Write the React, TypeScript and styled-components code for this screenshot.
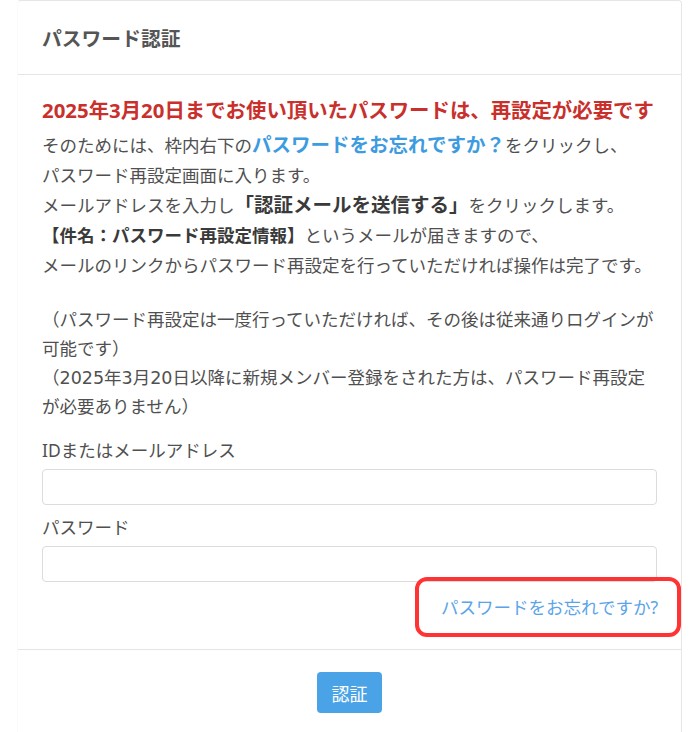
import styled, { createGlobalStyle } from "styled-components";

const GlobalStyle = createGlobalStyle`
  body {
    margin: 0;
    background: #ffffff;
    font-family: "Noto Sans", "Noto Sans CJK JP", sans-serif;
    color: #505050;
  }
`;

const Page = styled.div`
  padding-left: 17px;
  width: 665px;
  height: 732px;
  overflow: hidden;
`;

const Card = styled.div`
  background: #fff;
  border: 1px solid #e6e6e6;
  border-left-color: #fafafa;
  border-radius: 4px;
`;

const CardHeader = styled.div`
  height: 73px;
  display: flex;
  align-items: center;
  padding: 0 24px;
  border-bottom: 1px solid #e5e5e5;
`;

const HeaderTitle = styled.h3`
  margin: 0;
  font-size: 19.8px;
  font-weight: 700;
  color: #555;
`;

const CardBody = styled.div`
  padding: 20px 24px 30px;
  border-bottom: 1px solid #e5e5e5;
`;

const Warning = styled.div`
  font-size: 20.4px;
  line-height: 30px;
  font-weight: 700;
  color: #c9302c;
  white-space: nowrap;
`;

// digits in the notes run a little wider than Noto's, as in the original
const Paragraph = styled.p<{ $lh: number; $top: number }>`
  margin: ${(p) => p.$top}px 0 0;
  font-family: "DejaVu Sans", "Noto Sans CJK JP", sans-serif;
  font-size: 17.5px;
  line-height: ${(p) => p.$lh}px;
  color: #505050;
`;

const Highlight = styled.strong<{ $blue?: boolean }>`
  font-size: 19.5px;
  font-weight: 700;
  color: ${(p) => (p.$blue ? "#3d9be0" : "#3a3a3a")};
`;

const Strong = styled.strong`
  font-weight: 700;
  color: #3a3a3a;
`;

const Field = styled.div<{ $top: number }>`
  margin-top: ${(p) => p.$top}px;
  display: flex;
  flex-direction: column;
  gap: 4.5px;
`;

const Label = styled.label`
  font-size: 17.5px;
  line-height: 29px;
  color: #505050;
`;

const Input = styled.input`
  box-sizing: border-box;
  height: 36px;
  width: 100%;
  border: 1px solid #dcdcdc;
  border-radius: 4px;
  padding: 0 10px;
  font-size: 16px;
  outline: none;
`;

const LinkRow = styled.div`
  margin-top: 13px;
  display: flex;
  justify-content: flex-end;
`;

const ForgotLink = styled.a`
  position: relative;
  font-size: 17.5px;
  line-height: 24px;
  color: #5ba4e8;
  text-decoration: none;
  margin-right: -1px;

  &::after {
    content: "";
    position: absolute;
    left: -26px;
    right: -23px;
    top: -18px;
    bottom: -18px;
    border: 4px solid #ff3333;
    border-radius: 12px;
    pointer-events: none;
  }
`;

const CardFooter = styled.div`
  padding: 22px 0 40px;
  display: flex;
  justify-content: center;
`;

const SubmitButton = styled.button`
  width: 65px;
  height: 41px;
  border: none;
  border-radius: 4px;
  background: #4aa3e6;
  color: #fff;
  font-family: "Noto Sans CJK JP", sans-serif;
  font-size: 18px;
  cursor: pointer;
`;

export default function App() {
  return (
    <>
      <GlobalStyle />
      <Page>
        <Card>
          <CardHeader>
            <HeaderTitle>パスワード認証</HeaderTitle>
          </CardHeader>
          <CardBody>
            <Warning>2025年3月20日までお使い頂いたパスワードは、再設定が必要です</Warning>
            <Paragraph $lh={30} $top={6}>
              そのためには、枠内右下の<Highlight $blue>パスワードをお忘れですか？</Highlight>をクリックし、
              <br />
              パスワード再設定画面に入ります。
              <br />
              メールアドレスを入力し<Highlight>「認証メールを送信する」</Highlight>をクリックします。
              <br />
              <Strong>【件名：パスワード再設定情報】</Strong>というメールが届きますので、
              <br />
              メールのリンクからパスワード再設定を行っていただければ操作は完了です。
            </Paragraph>
            <Paragraph $lh={29} $top={24.5}>
              （パスワード再設定は一度行っていただければ、その後は従来通りログインが可能です）
              <br />
              （2025年3月20日以降に新規メンバー登録をされた方は、パスワード再設定が必要ありません）
            </Paragraph>
            <Field $top={14}>
              <Label>IDまたはメールアドレス</Label>
              <Input type="text" />
            </Field>
            <Field $top={7.5}>
              <Label>パスワード</Label>
              <Input type="password" />
            </Field>
            <LinkRow>
              <ForgotLink href="#">パスワードをお忘れですか?</ForgotLink>
            </LinkRow>
          </CardBody>
          <CardFooter>
            <SubmitButton>認証</SubmitButton>
          </CardFooter>
        </Card>
      </Page>
    </>
  );
}
